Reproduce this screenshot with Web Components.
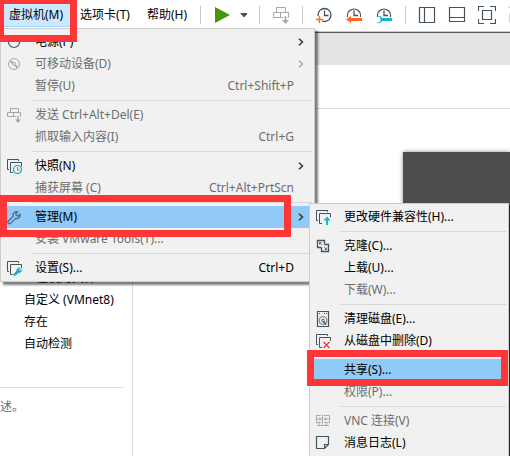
<!DOCTYPE html>
<html lang="zh-CN">
<head>
<meta charset="utf-8">
<title>虚拟机</title>
<style>
html, body { margin: 0; height: 100%; }
body { overflow: hidden; background: #fff; color: #000; font: 12px/22px "Noto Sans", "Noto Sans CJK SC", sans-serif; }
</style>
</head>
<body>
<vm-window>
  <vm-bar slot="bar">
    <vm-menu-button active>虚拟机(M)</vm-menu-button>
    <vm-menu-button>选项卡(T)</vm-menu-button>
    <vm-menu-button>帮助(H)</vm-menu-button>
    <vm-divider slot="tools"></vm-divider>
    <vm-tool slot="tools" icon="play" label="启动"></vm-tool>
    <vm-divider slot="tools"></vm-divider>
    <vm-tool slot="tools" icon="send" label="发送"></vm-tool>
    <vm-divider slot="tools"></vm-divider>
    <vm-tool slot="tools" icon="snapAdd" label="拍摄快照"></vm-tool>
    <vm-tool slot="tools" icon="snapBack" label="恢复快照"></vm-tool>
    <vm-tool slot="tools" icon="snapManage" label="管理快照"></vm-tool>
    <vm-divider slot="tools"></vm-divider>
    <vm-tool slot="tools" icon="sidebar" label="侧栏"></vm-tool>
    <vm-tool slot="tools" icon="bottom" label="缩略图栏"></vm-tool>
    <vm-tool slot="tools" icon="full" label="全屏"></vm-tool>
    <vm-tool slot="tools" icon="unity" label="Unity"></vm-tool>
  </vm-bar>
  <vm-details slot="side">
    <div>正在使用文件</div>
    <div>自定义 (VMnet8)</div>
    <div>存在</div>
    <div>自动检测</div>
    <span slot="note">述。</span>
  </vm-details>
  <vm-menu slot="menu">
    <vm-item icon="power" more>电源(P)</vm-item>
    <vm-item icon="disc" more disabled>可移动设备(D)</vm-item>
    <vm-item keys="Ctrl+Shift+P" disabled>暂停(U)</vm-item>
    <vm-rule></vm-rule>
    <vm-item icon="sendSmall" disabled>发送 Ctrl+Alt+Del(E)</vm-item>
    <vm-item keys="Ctrl+G" disabled>抓取输入内容(I)</vm-item>
    <vm-rule></vm-rule>
    <vm-item icon="snapshot" more>快照(N)</vm-item>
    <vm-item keys="Ctrl+Alt+PrtScn" disabled>捕获屏幕 (C)</vm-item>
    <vm-rule></vm-rule>
    <vm-item icon="wrench" more active>管理(M)</vm-item>
    <vm-item disabled>安装 VMware Tools(T)...</vm-item>
    <vm-rule></vm-rule>
    <vm-item icon="settings" keys="Ctrl+D">设置(S)...</vm-item>
  </vm-menu>
  <vm-menu slot="submenu">
    <vm-item icon="upgrade">更改硬件兼容性(H)...</vm-item>
    <vm-rule></vm-rule>
    <vm-item icon="clone">克隆(C)...</vm-item>
    <vm-item>上载(U)...</vm-item>
    <vm-item disabled>下载(W)...</vm-item>
    <vm-rule></vm-rule>
    <vm-item icon="disk">清理磁盘(E)...</vm-item>
    <vm-item icon="remove">从磁盘中删除(D)</vm-item>
    <vm-rule></vm-rule>
    <vm-item active>共享(S)...</vm-item>
    <vm-item disabled>权限(P)...</vm-item>
    <vm-rule></vm-rule>
    <vm-item icon="vnc" disabled>VNC 连接(V)</vm-item>
    <vm-item icon="log">消息日志(L)</vm-item>
  </vm-menu>
</vm-window>
<script>
const S = '#44545f';
const clock = `<path d="M3.500 13a6.500 6.500 0 1 1 11 0M9 4.500v5h4" fill="none" stroke="${S}" stroke-width="1.300"/>`;
const layers = `<path d="M3 11.500H1.500v-10h11V3" fill="none" stroke="${S}"/><path d="M7 14.500H4.500V4.500h11v4" fill="none" stroke="${S}"/>`;
const ICONS = {
  play: [34, 18, `<path d="M2 1v16l15-8z" fill="#46960c"/><path d="M27 7h8l-4 4.500z" fill="${S}"/>`],
  send: [18, 18, `<path d="M4.500 1.500h9v5h-9zM1.500 6.500h7v5h-7zM8.500 6.500h8v5h-8z" fill="none" stroke="#a3a9ae"/><path d="M13.500 10v5" stroke="#fff" stroke-width="4"/><path d="M13.500 10v6" stroke="#a3a9ae" stroke-width="1.500"/><path d="M10 14h7l-3.500 4z" fill="#a3a9ae"/>`],
  snapAdd: [18, 18, `<circle cx="9.500" cy="9" r="6.500" fill="none" stroke="${S}" stroke-width="1.300"/><path d="M9.500 4.500v5h4" fill="none" stroke="${S}" stroke-width="1.300"/><path d="M1 10h6v7H1z" fill="#fff"/><path d="M4.500 10v7M1 13.500h7" stroke="#ff6a1f" stroke-width="1.400"/>`],
  snapBack: [18, 18, `${clock}<path d="M0 11h18v6H0z" fill="#fff"/><path d="M1 13.500l5-3.500v2h11v3H6v2z" fill="#ff6a1f"/>`],
  snapManage: [18, 18, `${clock}<path d="M0 11h18v6H0z" fill="#fff"/><path d="M1 10.500c3-1.500 5-.5 6 1.500h10v3H7c-1 2-3 3-6 1.500h3l1.500-1.500v-3L4 10.500z" fill="#0bb5d6"/>`],
  sidebar: [18, 18, `<path d="M1.500 1.500h15v15h-15zM6.500 1.500v15" fill="none" stroke="${S}" stroke-width="1.200"/>`],
  bottom: [18, 18, `<path d="M1.500 1.500h15v14h-15zM1.500 11.500h15" fill="none" stroke="${S}" stroke-width="1.200"/>`],
  full: [18, 18, `<path d="M.5 5V.5H6M12 .5h5.500V5M17.500 13v4.500H12M6 17.500H.5V13M4.500 4.500h9v9h-9z" fill="none" stroke="${S}" stroke-width="1.200"/>`],
  unity: [18, 18, `<path d="M0 0l2 2h6" fill="none" stroke="#c4c8cb"/><path d="M1.500 7.500h8v9h-8z" fill="#a3a9ae"/>`],
  power: [16, 16, `<circle cx="8" cy="8" r="5.500" fill="none" stroke="${S}" stroke-width="1.200"/>`],
  disc: [16, 16, `<g fill="none" stroke="#aaa"><circle cx="8" cy="8" r="5.500"/><circle cx="8" cy="8" r="1.500"/><path d="M4.500 5l2 2M9.500 9.500l2 2" stroke-width="2"/></g>`],
  sendSmall: [16, 16, `<path d="M4.500 1.500h8v4h-8zM1.500 5.500h6v4h-6zM7.500 5.500h7v4h-7z" fill="none" stroke="#a6a6a6"/><path d="M12 9v5" stroke="#f1f1f1" stroke-width="4"/><path d="M12 9v5" stroke="#a6a6a6" stroke-width="1.500"/><path d="M9 12.500h6l-3 3.500z" fill="#a6a6a6"/>`],
  snapshot: [16, 16, `${layers}<circle cx="11.500" cy="11.500" r="4" fill="#f1f1f1" stroke="#12a5bf" stroke-width="1.200"/><path d="M11.500 9v3h2" fill="none" stroke="#12a5bf"/>`],
  wrench: [16, 16, `<path d="M2 12.500l5.300-5.300c-.8-2.500 1.500-5.200 4.400-4.300L9.800 5l.5 1.600 1.600.5 2.100-2c.8 2.700-1.800 5-4.300 4.300L4.400 14.600c-1.500 1-3.300-.8-2.400-2.100z" fill="none" stroke="#4e6475" stroke-width="1.200"/>`],
  settings: [16, 16, `${layers}<path d="M6.500 8h9v8h-9z" fill="#f1f1f1"/><path d="M7.500 14.500l3.500-3.500c-.4-2 1.300-3.400 3-2.800l-1.600 1.700.9 1.100 1.700-1.500c.6 2-.8 3.500-2.700 3L9.500 15c-1.300.8-2.600.2-2-.5z" fill="#12b0d0" stroke="#12b0d0"/>`],
  upgrade: [16, 16, `${layers}<path d="M7.500 8h8v8h-8z" fill="#f1f1f1"/><path d="M12 16v-6" stroke="#12b8d4" stroke-width="2"/><path d="M8.500 11.500L12 7.500l3.500 4z" fill="#12b8d4"/>`],
  clone: [16, 16, `<path d="M6.500 9.500h-4v-7h7v4M9.500 6.500h4v7h-7v-4" fill="none" stroke="${S}" stroke-width="1.300"/><path d="M4.500 4.500l2.500 2.500M4.500 6.500v-2h2M9 9l2.500 2.500M11.500 9.500v2h-2" fill="none" stroke="${S}" stroke-width=".8"/>`],
  disk: [16, 16, `<path d="M2.500.5h11v15h-11z" fill="none" stroke="${S}" stroke-width="1.200"/><path d="M4 2.500h1M9 2.500h1M11 2.500h1" stroke="${S}"/><circle cx="8" cy="9.500" r="3.800" fill="none" stroke="#81909b" stroke-width="1.300"/><circle cx="8" cy="9.500" r="1.300" fill="none" stroke="${S}"/><path d="M8.500 10.500l2.500 3" stroke="${S}" stroke-width="1.300"/>`],
  remove: [16, 16, `${layers}<path d="M7.500 8h8.500v8H7.500z" fill="#f1f1f1"/><path d="M8.500 9l6 6M14.500 9l-6 6" stroke="#f0393b" stroke-width="1.300"/>`],
  vnc: [16, 16, `<path d="M6 2.500H1.500v7H6M9 2.500h5.500v7H9M7.500 1.500v10M2 12.500h12M4 9.500v3M11.500 9.500v3M2 6h3M10.500 6h3" fill="none" stroke="#aaa"/><path d="M4.500 4v4L7 6zM11 4v4L8.500 6z" fill="#aaa"/>`],
  log: [16, 16, `<path d="M1.500 1.500h12v8l-4 4h-8zM9.500 13.500v-4h4" fill="none" stroke="${S}" stroke-width="1.200"/>`],
  more: [6, 8, `<path d="M1 .7l3.500 3.300L1 7.300" fill="none" stroke="currentColor" stroke-width="1.500"/>`]
};
const svg = n => { const [w, h, b] = ICONS[n]; return `<svg width="${w}" height="${h}" viewBox="0 0 ${w} ${h}" aria-hidden="true">${b}</svg>`; };
const define = (name, render) => customElements.define(name, class extends HTMLElement {
  constructor() { super(); this.attachShadow({ mode: 'open' }); }
  connectedCallback() { this.shadowRoot.innerHTML = render(this); }
});

define('vm-window', () => `<style>
  :host { display: flex; flex-direction: column; position: relative; min-height: 100vh; overflow: hidden; }
  .tabs { height: 32px; background: #e3e4e6; }
  .title { height: 43px; border-bottom: 1px solid #ddd; }
  .body { flex: 1; display: grid; grid-template-columns: 133px 1fr; }
  main { display: grid; padding: 43px 0 0 270px; }
  .screen { background: #4d4d4d; box-shadow: 0 0 4px #888; }
  .menu, .sub, vm-mark { position: absolute; }
  .menu { left: 0; top: 28px; width: 315px; }
  .sub { left: 309px; top: 203px; width: 200px; }
  .m1 { left: -3px; top: -3px; width: 80px; height: 45px; }
  .m2 { left: 0; top: 195px; width: 291px; height: 42px; }
  .m3 { left: 307px; top: 350px; width: 201px; height: 36px; }
  </style>
  <slot name="bar"></slot><div class="tabs"></div><div class="title"></div>
  <div class="body"><slot name="side"></slot><main><div class="screen"></div></main></div>
  <div class="menu"><slot name="menu"></slot></div>
  <div class="sub"><slot name="submenu"></slot></div>
  <vm-mark class="m1"></vm-mark><vm-mark class="m2"></vm-mark><vm-mark class="m3"></vm-mark>`);

define('vm-mark', () => `<style>:host { display: block; box-sizing: border-box; border: 7px solid #fd3737; pointer-events: none; }</style>`);

define('vm-bar', () => `<style>
  :host { display: flex; align-items: center; height: 30px; padding: 0 0 2px 1px; background: #fff; border-bottom: 1px solid #5a5a5a; box-shadow: inset 0 -1px #ccc; overflow: hidden; }
  nav { display: flex; flex: none; gap: 1px; width: 187px; }
  .tools { display: flex; flex: none; align-items: center; gap: 12px; padding-left: 12px; }
  </style><nav><slot></slot></nav><div class="tools"><slot name="tools"></slot></div>`);

define('vm-menu-button', () => `<style>
  :host { display: block; flex: none; }
  button { font: inherit; color: inherit; border: 0; border-bottom: 1px solid transparent; background: none; margin: 0; padding: 0 8px; height: 24px; white-space: nowrap; }
  :host([active]) button { background: #cce8ff; border-color: #99d1ff; }
  </style><button type="button"><slot></slot></button>`);

define('vm-divider', () => `<style>:host { display: block; width: 1px; height: 18px; background: #c8c8c8; }</style>`);

define('vm-tool', e => `<style>
  :host { display: block; flex: none; }
  button { display: block; border: 0; background: none; padding: 0; margin: 0; }
  svg { display: block; }
  </style><button type="button" aria-label="${e.getAttribute('label')}">${svg(e.getAttribute('icon'))}</button>`);

define('vm-details', () => `<style>
  :host { display: block; border-right: 1px solid #ddd; padding-top: 158px; }
  .rows { padding-left: 24px; white-space: nowrap; }
  hr { margin: 32px 8px 8px 0; border: 0; border-top: 1px solid #ddd; }
  p { margin: 0; color: #6d6d6d; }
  </style><div class="rows"><slot></slot></div><hr><p><slot name="note"></slot></p>`);

define('vm-menu', () => `<style>
  :host { display: block; padding: 2px; border: 1px solid #ccc; background: #f1f1f1; box-shadow: 3px 3px 2px rgba(0,0,0,.5); }
  </style><div role="menu"><slot></slot></div>`);

define('vm-item', e => `<style>
  :host { display: block; }
  button { display: grid; grid-template-columns: 16px 1fr auto 14px; align-items: center; width: 100%; height: 22px; margin: 0; padding: 0 0 0 3px; border: 0; background: none; font: inherit; color: #000; text-align: left; white-space: nowrap; }
  button:disabled { color: #6d6d6d; }
  :host([active]) button { background: #91c9f7; }
  svg { display: block; }
  .text { padding-left: 13px; }
  .keys { padding-right: 4px; }
  .more { color: #333; }
  button:disabled .more { color: #aaa; }
  </style><button type="button" role="menuitem" ${e.hasAttribute('disabled') ? 'disabled' : ''}>
  <span>${e.hasAttribute('icon') ? svg(e.getAttribute('icon')) : ''}</span><span class="text"><slot></slot></span>
  <span class="keys">${e.getAttribute('keys') || ''}</span><span class="more">${e.hasAttribute('more') ? svg('more') : ''}</span></button>`);

define('vm-rule', () => `<style>:host { display: block; padding: 3px 0 3px 28px; } div { height: 1px; background: #d7d7d7; }</style><div role="separator"></div>`);
</script>
</body>
</html>
